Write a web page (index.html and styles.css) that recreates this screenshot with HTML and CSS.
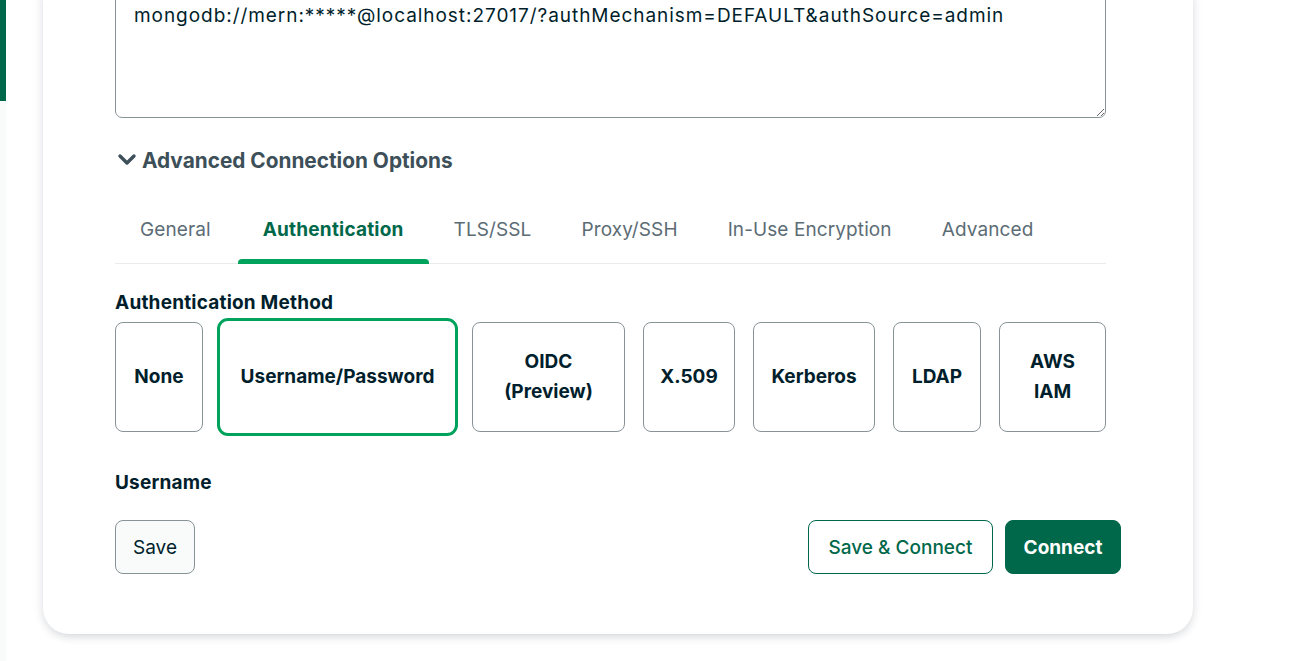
FILE: index.html
```html
<!DOCTYPE html>
<html>
<head>
<meta charset="utf-8">
<link rel="stylesheet" href="styles.css">
</head>
<body>
<div class="app">
  <aside class="rail"><div class="rail-active"></div></aside>
  <main class="main">
    <section class="card">
      <div class="form">
        <textarea class="uri" readonly spellcheck="false">mongodb://mern:*****@localhost:27017/?authMechanism=DEFAULT&amp;authSource=admin</textarea>
        <div class="adv-toggle">
          <svg class="chev" width="20" height="14" viewBox="0 0 20 14"><path d="M3 3 L10 10 L17 3" fill="none" stroke="#3d4f58" stroke-width="3.4" stroke-linecap="round" stroke-linejoin="round"/></svg>
          <span>Advanced Connection Options</span>
        </div>
        <nav class="tabs">
          <div class="tab">General</div>
          <div class="tab active">Authentication</div>
          <div class="tab">TLS/SSL</div>
          <div class="tab">Proxy/SSH</div>
          <div class="tab">In-Use Encryption</div>
          <div class="tab">Advanced</div>
        </nav>
        <div class="label">Authentication Method</div>
        <div class="methods">
          <div class="method m-none">None</div>
          <div class="method selected m-user">Username/Password</div>
          <div class="method m-oidc">OIDC<br>(Preview)</div>
          <div class="method m-x509">X.509</div>
          <div class="method m-kerb">Kerberos</div>
          <div class="method m-ldap">LDAP</div>
          <div class="method m-aws">AWS<br>IAM</div>
        </div>
        <div class="label user-label">Username</div>
      </div>
      <footer class="actions">
        <button class="btn btn-save">Save</button>
        <div class="spacer"></div>
        <button class="btn btn-outline">Save &amp; Connect</button>
        <button class="btn btn-primary">Connect</button>
      </footer>
    </section>
  </main>
</div>
</body>
</html>
```

FILE: styles.css
```css
html, body {
  margin: 0;
  padding: 0;
  background: #ffffff;
  overflow: hidden;
}
body {
  font-family: "Inter", "Noto Sans", sans-serif;
  color: #001e2b;
  width: 1292px;
  height: 661px;
}
.app {
  display: flex;
  height: 661px;
}
.rail {
  width: 6px;
  flex: none;
  background: #f9fbfa;
}
.rail-active {
  height: 101px;
  background: #00684a;
}
.main {
  flex: 1;
  padding-left: 37px;
}
.card {
  width: 1150px;
  box-sizing: border-box;
  margin-top: -10px;
  background: #fff;
  border-radius: 0 0 26px 26px;
  box-shadow: 0 4px 10px -2px rgba(0, 30, 43, 0.16), 0 0 14px rgba(0, 30, 43, 0.06);
  padding: 0 72px 60px 72px;
}
.form {
  margin-right: 15px;
}
.uri {
  display: block;
  width: 100%;
  box-sizing: border-box;
  height: 128px;
  margin: 0;
  padding: 12px 18px;
  border: 1px solid #889397;
  border-radius: 7px;
  font-family: "Inter", "Noto Sans", sans-serif;
  font-size: 19px;
  letter-spacing: 0.95px;
  line-height: 26px;
  color: #001e2b;
  resize: vertical;
  outline: none;
}
.adv-toggle {
  display: flex;
  align-items: center;
  gap: 5px;
  margin-top: 29px;
  height: 26px;
  font-size: 20.8px;
  font-weight: 700;
  color: #3d4f58;
}
.chev {
  margin-left: 2px;
}
.tabs {
  display: flex;
  margin-top: 28px;
  border-bottom: 1px solid #e8edeb;
  height: 63px;
  box-sizing: border-box;
}
.tab {
  position: relative;
  padding: 0 25px;
  font-size: 19px;
  line-height: 24px;
  padding-top: 17px;
  color: #5c6c75;
  font-weight: 400;
  letter-spacing: 0.1px;
}
.tab:first-child {
  padding-right: 27px;
}
.tab.active {
  color: #00684a;
  font-weight: 700;
  letter-spacing: 0.2px;
}
.tab.active::after {
  content: "";
  position: absolute;
  left: 0;
  right: 0;
  bottom: -1px;
  height: 5px;
  border-radius: 4px 4px 0 0;
  background: #00a35c;
}
.label {
  font-size: 19px;
  font-weight: 700;
  color: #001e2b;
  margin-top: 28px;
  line-height: 22px;
  letter-spacing: 0.2px;
}
.methods {
  display: flex;
  gap: 18px;
  margin-top: 8px;
  height: 110px;
  align-items: center;
}
.method {
  box-sizing: border-box;
  height: 110px;
  border: 1px solid #889397;
  border-radius: 8px;
  display: flex;
  align-items: center;
  justify-content: center;
  text-align: center;
  font-size: 19px;
  font-weight: 700;
  line-height: 30px;
  color: #001e2b;
  flex: none;
}
.method.selected {
  border: 3px solid #00a35c;
  border-radius: 11px;
  height: 118px;
  margin: 0 -4px;
}
.m-none { width: 88px; }
.m-user { width: 241px; }
.m-oidc { width: 153px; }
.m-x509 { width: 92px; }
.m-kerb { width: 122px; }
.m-ldap { width: 88px; }
.m-aws { width: 107px; }
.user-label {
  margin-top: 40px;
}
.actions {
  display: flex;
  align-items: center;
  gap: 12px;
  margin-top: 26px;
}
.spacer { flex: 1; }
.btn {
  height: 54px;
  box-sizing: border-box;
  border-radius: 8px;
  font-family: "Inter", "Noto Sans", sans-serif;
  font-size: 19px;
  padding: 0;
  cursor: pointer;
}
.btn-save {
  width: 80px;
  background: #f9fbfa;
  border: 1px solid #889397;
  color: #001e2b;
  font-weight: 400;
}
.btn-outline {
  width: 185px;
  background: #fff;
  border: 1px solid #00684a;
  color: #00684a;
  font-weight: 500;
}
.btn-primary {
  width: 116px;
  background: #00684a;
  border: 1px solid #00684a;
  color: #fff;
  font-weight: 700;
}
```
